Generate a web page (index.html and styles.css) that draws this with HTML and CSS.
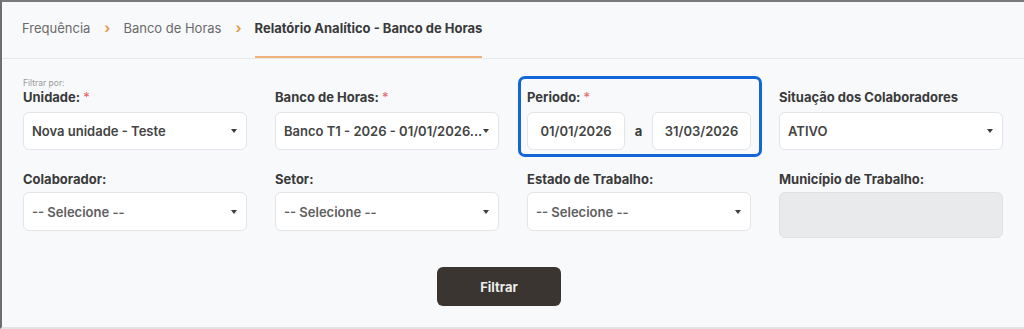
FILE: index.html
```html
<!DOCTYPE html>
<html lang="pt-BR">
<head>
<meta charset="utf-8">
<title>Relatório Analítico - Banco de Horas</title>
<link rel="stylesheet" href="styles.css">
</head>
<body>
<div class="frame">
  <nav class="crumbs">
    <span class="crumb">Frequência</span>
    <span class="sep">›</span>
    <span class="crumb">Banco de Horas</span>
    <span class="sep">›</span>
    <span class="crumb active">Relatório Analítico - Banco de Horas</span>
  </nav>
  <section class="filters">
    <div class="hint">Filtrar por:</div>
    <div class="grid">
      <div class="field">
        <label class="lbl">Unidade: <span class="req">*</span></label>
        <div class="select"><span>Nova unidade - Teste</span><i class="caret"></i></div>
      </div>
      <div class="field">
        <label class="lbl">Banco de Horas: <span class="req">*</span></label>
        <div class="select"><span>Banco T1 - 2026 - 01/01/2026...</span><i class="caret"></i></div>
      </div>
      <div class="field highlight">
        <label class="lbl">Periodo: <span class="req">*</span></label>
        <div class="range">
          <div class="date">01/01/2026</div>
          <span class="a">a</span>
          <div class="date">31/03/2026</div>
        </div>
      </div>
      <div class="field">
        <label class="lbl">Situação dos Colaboradores</label>
        <div class="select"><span>ATIVO</span><i class="caret"></i></div>
      </div>
      <div class="field row2">
        <label class="lbl">Colaborador:</label>
        <div class="select tall"><span class="ph">-- Selecione --</span><i class="caret"></i></div>
      </div>
      <div class="field row2">
        <label class="lbl">Setor:</label>
        <div class="select tall"><span class="ph">-- Selecione --</span><i class="caret"></i></div>
      </div>
      <div class="field row2">
        <label class="lbl">Estado de Trabalho:</label>
        <div class="select tall"><span class="ph">-- Selecione --</span><i class="caret"></i></div>
      </div>
      <div class="field row2">
        <label class="lbl">Município de Trabalho:</label>
        <div class="disabled"></div>
      </div>
    </div>
    <div class="actions">
      <button class="btn">Filtrar</button>
    </div>
  </section>
</div>
</body>
</html>
```

FILE: styles.css
```css
* { box-sizing: border-box; }
html, body { margin: 0; padding: 0; }
body {
  width: 1024px;
  height: 329px;
  background: #f8f9fa;
  font-family: Inter, "Noto Sans", sans-serif;
  color: #3b3b3b;
  overflow: hidden;
}
.frame {
  height: 329px;
  border-top: 2px solid #7a7a7a;
  border-left: 2px solid #6e6e6e;
  border-bottom: 2px solid #e2e3e5;
}
.crumbs {
  display: flex;
  align-items: flex-start;
  height: 57px;
  padding-left: 20px;
  border-bottom: 1px solid #e8e9eb;
  font-size: 13px;
}
.crumb {
  color: #6a6a6a;
  padding-top: 18px;
  height: 56px;
}
.crumb.active {
  color: #3a3a3a;
  font-weight: 700;
  border-bottom: 2px solid #efb27c;
}
.sep {
  color: #e39a4c;
  font-weight: 700;
  font-size: 14px;
  padding-top: 17px;
  margin: 0 13px 0 14px;
}
.filters {
  padding: 19px 19px 0 21px;
}
.hint {
  font-size: 8.5px;
  color: #9a9a9a;
  line-height: 10px;
  margin-bottom: 1px;
}
.grid {
  display: grid;
  grid-template-columns: repeat(4, 224px);
  column-gap: 28px;
}
.field { display: flex; flex-direction: column; }
.lbl {
  font-size: 13px;
  font-weight: 700;
  color: #3a3a3a;
  line-height: 16px;
  height: 16px;
  margin-bottom: 7px;
}
.req { color: #e2636b; font-weight: 400; }
.select {
  display: flex;
  align-items: center;
  justify-content: space-between;
  height: 38px;
  background: #fff;
  border: 1px solid #e3e5e8;
  border-radius: 6px;
  padding: 0 9px 0 8px;
  font-size: 13px;
  font-weight: 600;
  color: #444;
}
.select.tall { height: 39px; }
.select .ph { color: #5e5e5e; }
.caret {
  width: 0; height: 0;
  border-left: 3px solid transparent;
  border-right: 3px solid transparent;
  border-top: 4px solid #3c3c3c;
}
.highlight {
  margin: -13px -11px -7px -9px;
  padding: 10px 8px 4px 6px;
  border: 3px solid #1466d8;
  border-radius: 7px;
}
.range {
  display: flex;
  align-items: center;
}
.date {
  height: 38px;
  display: flex;
  align-items: center;
  justify-content: center;
  background: #fff;
  border: 1px solid #e3e5e8;
  border-radius: 6px;
  font-size: 13px;
  font-weight: 600;
  color: #444;
  width: 98px;
}
.date:last-child { width: 99px; }
.a {
  flex: 1;
  text-align: center;
  font-size: 13px;
  font-weight: 700;
  color: #3a3a3a;
}
.row2 { margin-top: 21px; }
.row2 .lbl { margin-bottom: 5px; }
.disabled {
  height: 46px;
  background: #e9eaec;
  border: 1px solid #e0e1e4;
  border-radius: 6px;
}
.actions {
  display: flex;
  justify-content: center;
  padding-top: 29px;
  padding-right: 30px;
}
.btn {
  width: 124px;
  height: 39px;
  background: #3a3530;
  color: #ececec;
  border: none;
  border-radius: 6px;
  font-family: Inter, "Noto Sans", sans-serif;
  font-size: 13px;
  font-weight: 700;
}
```
